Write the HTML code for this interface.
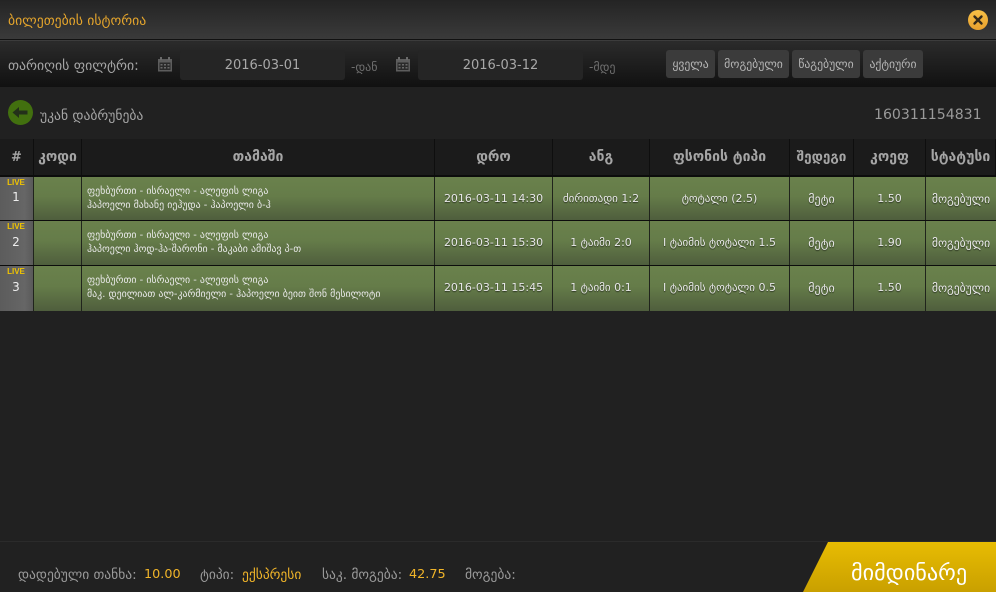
<!DOCTYPE html>
<html lang="ka"><head><meta charset="utf-8"><style>
html,body{margin:0;padding:0;background:#212121}
#p{position:relative;width:996px;height:592px;overflow:hidden;background:#212121;font-family:"Liberation Sans","DejaVu Sans",sans-serif;color:#aaa}
#p div,#p span.a{position:absolute}
.t{white-space:nowrap;font-family:"DejaVu Sans",sans-serif;font-size:12px;line-height:16px}
.c{text-align:center}
.hc{top:139px;height:36px;background:#1b1b1b;border-right:1px solid #0e0e0e;box-sizing:border-box;text-align:center;font:bold 14px/37px "DejaVu Sans",sans-serif;color:#a5a5a5;white-space:nowrap}
.r{left:0;width:996px;background:linear-gradient(#6a814c 0%,#657c49 45%,#4f5e3d 100%)}
.cell{top:0;bottom:0;text-align:center;font:11px/44px "DejaVu Sans",sans-serif;color:#e8e8e8;white-space:nowrap;text-shadow:0 1px 1px #2a3320}
.v{top:0;bottom:0;width:1px;background:#20241c}
.btn{top:50px;height:28px;background:#3b3b3b;border-radius:3px;text-align:center;font:11.7px/28px "DejaVu Sans",sans-serif;color:#b5b5b5;white-space:nowrap}
.inp{top:50px;height:30px;background:#252525;border-radius:3px;text-align:center;font:13px/32px "DejaVu Sans",sans-serif;color:#a8a8a8}
.g{font-size:9.9px;line-height:14px;color:#e8e8e8;left:87px}
.s{font-size:11.6px}
.m{font-size:12px}
.f{top:567px;font-size:13.5px;color:#9a9a9a}
.y{color:#f0b429;font-size:12.8px}
</style></head><body><div id="p">
<div style="left:0;top:0;width:996px;height:39px;background:linear-gradient(#242424,#3a3a3a)"></div>
<div style="left:0;top:39px;width:996px;height:1px;background:#111"></div>
<div style="left:0;top:40px;width:996px;height:1px;background:#3c3c3c"></div>
<div style="left:0;top:41px;width:996px;height:46px;background:linear-gradient(#2b2b2b,#111)"></div>
<div class="t" style="left:8px;top:13px;font-size:13.7px;color:#e5a52c">ბილეთების ისტორია</div>
<svg style="position:absolute;left:968px;top:10px" width="20" height="20" viewBox="0 0 20 20"><defs><linearGradient id="g" x1="0" y1="0" x2="0" y2="1"><stop offset="0" stop-color="#f7c046"/><stop offset="1" stop-color="#e8a02e"/></linearGradient></defs><circle cx="10" cy="10" r="10" fill="url(#g)"/><path d="M6.5 6.5L13.5 13.5M13.5 6.5L6.5 13.5" stroke="#33291a" stroke-width="2.4" stroke-linecap="round"/></svg>

<div class="t" style="left:8px;top:58px;font-size:13.8px;color:#a5a5a5">თარიღის ფილტრი:</div>
<svg style="position:absolute;left:157px;top:56px" width="16" height="16" viewBox="0 0 16 16"><path d="M1 3H15V15.5H1Z" fill="#5d5d5d"/><rect x="2.5" y="6.5" width="11" height="7.5" fill="#2a2a2a"/><path d="M4 1V4M12 1V4" stroke="#6a6a6a" stroke-width="2"/><path d="M3.5 8h2v1.5h-2zM7 8h2v1.5H7zM10.5 8h2v1.5h-2zM3.5 11h2v1.5h-2zM7 11h2v1.5H7zM10.5 11h2v1.5h-2z" fill="#6a6a6a"/></svg>
<div class="inp" style="left:180px;width:165px">2016-03-01</div>
<div class="t" style="left:351px;top:59px;font-size:12px;color:#6e6e6e">-დან</div>
<svg style="position:absolute;left:395px;top:56px" width="16" height="16" viewBox="0 0 16 16"><path d="M1 3H15V15.5H1Z" fill="#5d5d5d"/><rect x="2.5" y="6.5" width="11" height="7.5" fill="#2a2a2a"/><path d="M4 1V4M12 1V4" stroke="#6a6a6a" stroke-width="2"/><path d="M3.5 8h2v1.5h-2zM7 8h2v1.5H7zM10.5 8h2v1.5h-2zM3.5 11h2v1.5h-2zM7 11h2v1.5H7zM10.5 11h2v1.5h-2z" fill="#6a6a6a"/></svg>
<div class="inp" style="left:418px;width:165px">2016-03-12</div>
<div class="t" style="left:589px;top:59px;font-size:12px;color:#6e6e6e">-მდე</div>
<div class="btn" style="left:666px;width:49px">ყველა</div>
<div class="btn" style="left:718px;width:71px">მოგებული</div>
<div class="btn" style="left:792px;width:68px">წაგებული</div>
<div class="btn" style="left:863px;width:60px">აქტიური</div>

<svg style="position:absolute;left:8px;top:100px" width="25" height="25" viewBox="0 0 25 25"><circle cx="12.5" cy="12.5" r="12.5" fill="#42700f"/><path d="M4.5 12.5L11 7V10.5H19.5V14.5H11V18Z" fill="#23301a"/></svg>
<div class="t" style="left:40px;top:108px;font-size:13.6px;color:#a5a5a5">უკან დაბრუნება</div>
<div class="t" style="left:874px;top:107px;font-size:14.1px;line-height:17px;color:#9a9a9a">160311154831</div>

<div class="hc" style="left:0;width:34px;font-size:13px">#</div>
<div class="hc" style="left:34px;width:48px">კოდი</div>
<div class="hc" style="left:82px;width:353px">თამაში</div>
<div class="hc" style="left:435px;width:118px">დრო</div>
<div class="hc" style="left:553px;width:97px">ანგ</div>
<div class="hc" style="left:650px;width:140px">ფსონის ტიპი</div>
<div class="hc" style="left:790px;width:64px;font-size:13.5px">შედეგი</div>
<div class="hc" style="left:854px;width:72px">კოეფ</div>
<div class="hc" style="left:926px;width:70px">სტატუსი</div>
<div style="left:0;top:175px;width:996px;height:2px;background:#0c0c0c"></div>

<div class="r" style="top:177px;height:43px">
<div style="left:0;top:0;bottom:0;width:33px;background:linear-gradient(90deg,#5c5c5c,#666 75%,#5a5a5a)"></div>
<div class="v" style="left:33px"></div><div class="v" style="left:81px"></div><div class="v" style="left:434px"></div><div class="v" style="left:552px"></div><div class="v" style="left:649px"></div><div class="v" style="left:789px"></div><div class="v" style="left:853px"></div><div class="v" style="left:925px"></div>
<div class="t c" style="left:0;width:32px;top:0;font:bold 8px/11px 'Liberation Sans',sans-serif;color:#f0c400">LIVE</div>
<div class="t c" style="left:0;width:32px;top:12px;color:#eee;font-size:12px">1</div>
<div class="t g" style="top:8px">ფეხბურთი - ისრაელი - ალეფის ლიგა<br>ჰაპოელი მახანე იეჰუდა - ჰაპოელი ბ-ჰ</div>
<div class="cell" style="left:435px;width:117px">2016-03-11 14:30</div>
<div class="cell" style="left:553px;width:96px">ძირითადი 1:2</div>
<div class="cell" style="left:650px;width:139px">ტოტალი (2.5)</div>
<div class="cell m" style="left:790px;width:63px">მეტი</div>
<div class="cell" style="left:854px;width:71px">1.50</div>
<div class="cell s" style="left:926px;width:70px">მოგებული</div>
</div>
<div style="left:0;top:220px;width:996px;height:1px;background:#0c0c0c"></div>

<div class="r" style="top:221px;height:44px">
<div style="left:0;top:0;bottom:0;width:33px;background:linear-gradient(90deg,#5c5c5c,#666 75%,#5a5a5a)"></div>
<div class="v" style="left:33px"></div><div class="v" style="left:81px"></div><div class="v" style="left:434px"></div><div class="v" style="left:552px"></div><div class="v" style="left:649px"></div><div class="v" style="left:789px"></div><div class="v" style="left:853px"></div><div class="v" style="left:925px"></div>
<div class="t c" style="left:0;width:32px;top:0;font:bold 8px/11px 'Liberation Sans',sans-serif;color:#f0c400">LIVE</div>
<div class="t c" style="left:0;width:32px;top:13px;color:#eee;font-size:12px">2</div>
<div class="t g" style="top:8px">ფეხბურთი - ისრაელი - ალეფის ლიგა<br>ჰაპოელი ჰოდ-ჰა-შარონი - მაკაბი ამიშავ პ-თ</div>
<div class="cell" style="left:435px;width:117px">2016-03-11 15:30</div>
<div class="cell" style="left:553px;width:96px">1 ტაიმი 2:0</div>
<div class="cell" style="left:650px;width:139px">I ტაიმის ტოტალი 1.5</div>
<div class="cell m" style="left:790px;width:63px">მეტი</div>
<div class="cell" style="left:854px;width:71px">1.90</div>
<div class="cell s" style="left:926px;width:70px">მოგებული</div>
</div>
<div style="left:0;top:265px;width:996px;height:1px;background:#0c0c0c"></div>

<div class="r" style="top:266px;height:45px">
<div style="left:0;top:0;bottom:0;width:33px;background:linear-gradient(90deg,#5c5c5c,#666 75%,#5a5a5a)"></div>
<div class="v" style="left:33px"></div><div class="v" style="left:81px"></div><div class="v" style="left:434px"></div><div class="v" style="left:552px"></div><div class="v" style="left:649px"></div><div class="v" style="left:789px"></div><div class="v" style="left:853px"></div><div class="v" style="left:925px"></div>
<div class="t c" style="left:0;width:32px;top:0;font:bold 8px/11px 'Liberation Sans',sans-serif;color:#f0c400">LIVE</div>
<div class="t c" style="left:0;width:32px;top:13px;color:#eee;font-size:12px">3</div>
<div class="t g" style="top:8px">ფეხბურთი - ისრაელი - ალეფის ლიგა<br>მაკ. დეილიათ ალ-კარმიელი - ჰაპოელი ბეით შონ მესილოტი</div>
<div class="cell" style="left:435px;width:117px">2016-03-11 15:45</div>
<div class="cell" style="left:553px;width:96px">1 ტაიმი 0:1</div>
<div class="cell" style="left:650px;width:139px">I ტაიმის ტოტალი 0.5</div>
<div class="cell m" style="left:790px;width:63px">მეტი</div>
<div class="cell" style="left:854px;width:71px">1.50</div>
<div class="cell s" style="left:926px;width:70px">მოგებული</div>
</div>

<div style="left:0;top:541px;width:996px;height:1px;background:#2b2b2b"></div>
<div class="t f" style="left:18px">დადებული თანხა:</div>
<div class="t f y" style="left:144px">10.00</div>
<div class="t f" style="left:200px">ტიპი:</div>
<div class="t f" style="left:242px;color:#f0b429">ექსპრესი</div>
<div class="t f" style="left:322px">საკ. მოგება:</div>
<div class="t f y" style="left:409px">42.75</div>
<div class="t f" style="left:465px">მოგება:</div>
<div style="left:803px;top:542px;width:193px;height:50px;background:linear-gradient(#e8bc02,#c9a000);clip-path:polygon(25px 0,100% 0,100% 100%,0 100%)"></div>
<div class="t" style="left:851px;top:559px;font-size:22.2px;line-height:28px;color:#fff">მიმდინარე</div>
</div></body></html>
